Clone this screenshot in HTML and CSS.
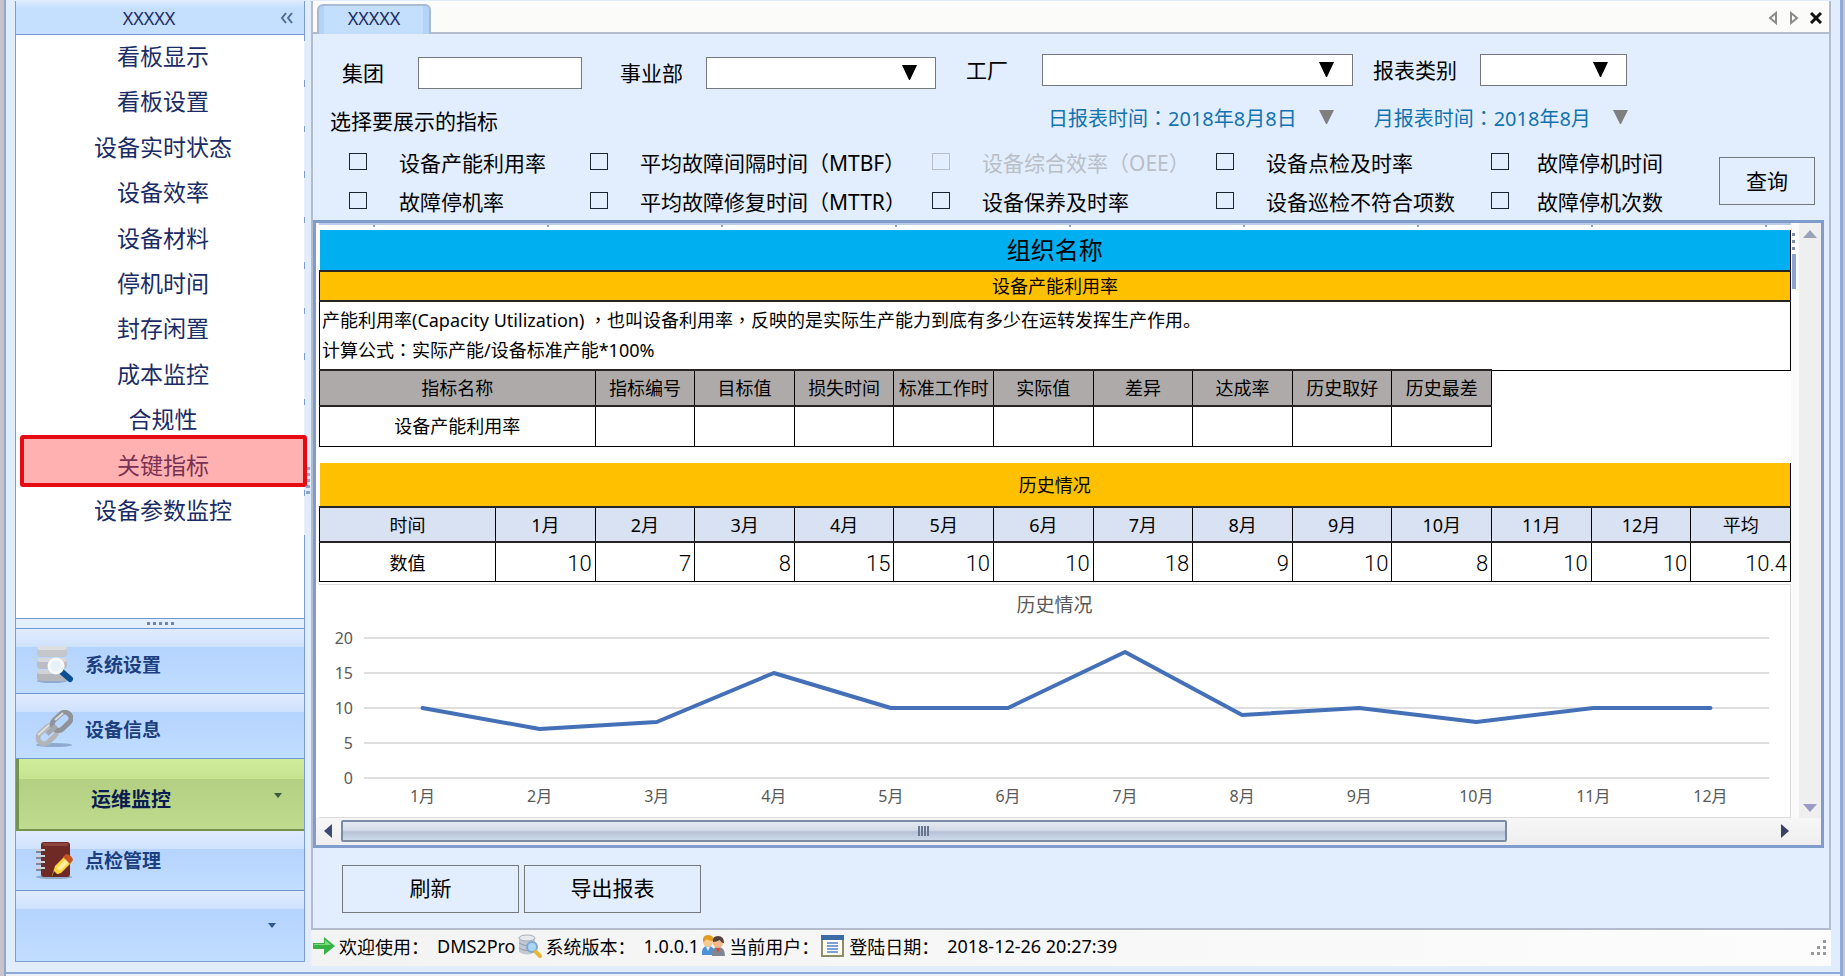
FILE: index.html
```html
<!DOCTYPE html>
<html lang="zh-CN">
<head>
<meta charset="utf-8">
<title>关键指标</title>
<link rel="stylesheet" href="styles.css">
</head>
<body>
<div class="window">
  <aside class="sidebar">
    <header class="side-head">
      <span>XXXXX</span>
      <button class="collapse" type="button" aria-label="收起">
        <svg width="14" height="12" viewBox="0 0 14 12"><path d="M6 1 2 6l4 5M12 1 8 6l4 5" fill="none" stroke="#4d6a9c" stroke-width="2"/></svg>
      </button>
    </header>
    <nav class="side-list">
      <a href="#">看板显示</a>
      <a href="#">看板设置</a>
      <a href="#">设备实时状态</a>
      <a href="#">设备效率</a>
      <a href="#">设备材料</a>
      <a href="#">停机时间</a>
      <a href="#">封存闲置</a>
      <a href="#">成本监控</a>
      <a href="#">合规性</a>
      <a href="#" class="current">关键指标</a>
      <a href="#">设备参数监控</a>
    </nav>
    <div class="grip"><i></i><i></i><i></i><i></i><i></i></div>
    <nav class="modules">
      <button type="button" class="module">
        <svg width="38" height="38" viewBox="0 0 38 38">
          <ellipse cx="17" cy="36" rx="15" ry="2" fill="#8fa9cf"/>
          <rect x="2" y="1" width="30" height="11" rx="4" fill="#c3c6ca"/><rect x="2" y="1" width="30" height="4" rx="2" fill="#dcdee0"/>
          <rect x="2" y="13" width="30" height="11" rx="4" fill="#b9bcc1"/><rect x="2" y="13" width="30" height="4" rx="2" fill="#d5d7da"/>
          <rect x="2" y="25" width="30" height="11" rx="4" fill="#b4b7bc"/><rect x="2" y="25" width="30" height="4" rx="2" fill="#d0d2d5"/>
          <path d="m27 27 8 7" stroke="#0d4f92" stroke-width="6" stroke-linecap="round"/>
          <circle cx="21" cy="21" r="7" fill="#e6f1f8" stroke="#f7f9fa" stroke-width="3"/>
        </svg>
        <span>系统设置</span>
      </button>
      <button type="button" class="module">
        <svg width="38" height="38" viewBox="0 0 38 38">
          <ellipse cx="19" cy="35" rx="18" ry="2" fill="#8fa9cf"/>
          <g fill="none" stroke-width="5">
            <rect x="-10" y="-6" width="21" height="12" rx="6" transform="translate(12 25) rotate(-43)" stroke="#b3b5b8"/>
            <rect x="-11" y="-6" width="21" height="12" rx="6" transform="translate(27 11) rotate(-43)" stroke="#8f9297"/>
            <path d="m12 24 9-8" stroke="#a4a7ab"/>
          </g>
          <path d="M3 25 14 15M20 10l8-7" stroke="#dcdedf" stroke-width="2" fill="none"/>
        </svg>
        <span>设备信息</span>
      </button>
      <button type="button" class="module active">
        <span>运维监控</span>
        <svg class="drop" width="8" height="5" viewBox="0 0 8 5"><path d="M0 0h8L4 5z" fill="#3d5c3d"/></svg>
      </button>
      <button type="button" class="module short">
        <svg width="38" height="38" viewBox="0 0 38 38">
          <ellipse cx="19" cy="36" rx="18" ry="2" fill="#8fa9cf"/>
          <rect x="6" y="1" width="29" height="35" rx="3" fill="#6f2a26"/><rect x="8" y="2" width="25" height="3" rx="1" fill="#8d443d"/>
          <path d="M1 9h9M1 15h9M1 21h9M1 27h9" stroke="#cfd3d8" stroke-width="2"/><path d="M1 11h9M1 17h9M1 23h9M1 29h9" stroke="#4b3a3d"/>
          <path d="m17 35 3-10 10-10 7 6-11 11z" fill="#ffd23c"/><path d="m22 27 10-10 3 3-10 10z" fill="#fff0a0"/>
          <path d="m28 16 3-3q6 1 7 6l-3 4z" fill="#c9541f"/><path d="m17 36 2-6 4 4z" fill="#4e2a18"/>
        </svg>
        <span>点检管理</span>
      </button>
      <div class="module rest">
        <svg class="drop" width="8" height="5" viewBox="0 0 8 5"><path d="M0 0h8L4 5z" fill="#2d588f"/></svg>
      </div>
    </nav>
    <div class="split-dots"><i></i><i></i><i></i><i></i><i></i></div>
  </aside>

  <main class="main">
    <div class="panel">
      <div class="tabs">
        <button type="button" class="tab">XXXXX</button>
        <div class="tab-tools">
          <button type="button" aria-label="上一个"><svg width="10" height="14" viewBox="0 0 10 14"><path d="M8 2v10L2 7z" fill="#fff" stroke="#8b8b8b" stroke-width="2"/></svg></button>
          <button type="button" aria-label="下一个"><svg width="10" height="14" viewBox="0 0 10 14"><path d="M2 2v10l6-5z" fill="#fff" stroke="#8b8b8b" stroke-width="2"/></svg></button>
          <button type="button" aria-label="关闭"><svg width="12" height="12" viewBox="0 0 12 12"><path d="m1 1 10 10M11 1 1 11" stroke="#111" stroke-width="3"/></svg></button>
        </div>
      </div>

      <form class="filters">
        <div class="row fields">
          <label for="group">集团</label>
          <input id="group" class="box w-group" type="text">
          <label for="division">事业部</label>
          <div class="pick w-division"><select id="division" class="box"><option></option></select><svg width="15" height="15" viewBox="0 0 15 15"><path d="M0 0h15L8 15H7z"/></svg></div>
          <div class="raised">
            <label for="factory">工厂</label>
            <div class="pick w-factory"><select id="factory" class="box"><option></option></select><svg width="15" height="15" viewBox="0 0 15 15"><path d="M0 0h15L8 15H7z"/></svg></div>
            <label for="kind">报表类别</label>
            <div class="pick w-kind"><select id="kind" class="box"><option></option></select><svg width="15" height="15" viewBox="0 0 15 15"><path d="M0 0h15L8 15H7z"/></svg></div>
          </div>
        </div>
        <div class="row dates">
          <span class="hint">选择要展示的指标</span>
          <div class="raised">
            <button type="button" class="date"><span>日报表时间<span class="mid" lang="zh-TW">：</span>2018年8月8日</span><svg width="15" height="14" viewBox="0 0 15 14"><path d="M0 0h15L8 14H7z" fill="#7f7f7f"/></svg></button>
            <button type="button" class="date"><span>月报表时间<span class="mid" lang="zh-TW">：</span>2018年8月</span><svg width="15" height="14" viewBox="0 0 15 14"><path d="M0 0h15L8 14H7z" fill="#7f7f7f"/></svg></button>
          </div>
        </div>
        <div class="metrics">
          <div class="checks">
            <label><input type="checkbox">设备产能利用率</label>
            <label><input type="checkbox"><span>平均故障间隔时间<span class="mid" lang="zh-TW">（</span>MTBF<span class="mid" lang="zh-TW">）</span></span></label>
            <label class="off"><input type="checkbox" disabled><span>设备综合效率<span class="mid" lang="zh-TW">（</span>OEE<span class="mid" lang="zh-TW">）</span></span></label>
            <label><input type="checkbox">设备点检及时率</label>
            <label><input type="checkbox">故障停机时间</label>
            <label><input type="checkbox">故障停机率</label>
            <label><input type="checkbox"><span>平均故障修复时间<span class="mid" lang="zh-TW">（</span>MTTR<span class="mid" lang="zh-TW">）</span></span></label>
            <label><input type="checkbox">设备保养及时率</label>
            <label><input type="checkbox">设备巡检不符合项数</label>
            <label><input type="checkbox">故障停机次数</label>
          </div>
          <button type="button" class="btn query">查询</button>
        </div>
      </form>

      <section class="viewer">
        <div class="view-body">
          <div class="sheet">
            <div class="ruler"></div>
            <table class="report">
              <colgroup><col class="c-first"><col span="13"></colgroup>
              <tbody>
                <tr class="title"><th colspan="14">组织名称</th></tr>
                <tr class="sub"><th colspan="14">设备产能利用率</th></tr>
                <tr class="desc"><td colspan="14">产能利用率(Capacity Utilization) <span class="mid" lang="zh-TW">，</span>也叫设备利用率<span class="mid" lang="zh-TW">，</span>反映的是实际生产能力到底有多少在运转发挥生产作用。<br>计算公式<span class="mid" lang="zh-TW">：</span>实际产能/设备标准产能*100%</td></tr>
                <tr class="heads"><th colspan="2">指标名称</th><th>指标编号</th><th>目标值</th><th>损失时间</th><th>标准工作时</th><th>实际值</th><th>差异</th><th>达成率</th><th>历史取好</th><th>历史最差</th><td class="none" colspan="3"></td></tr>
                <tr class="metric"><td colspan="2">设备产能利用率</td><td></td><td></td><td></td><td></td><td></td><td></td><td></td><td></td><td></td><td class="none" colspan="3"></td></tr>
                <tr class="gap"><td class="none" colspan="14"></td></tr>
                <tr class="history"><th colspan="14">历史情况</th></tr>
                <tr class="months"><th>时间</th><th>1月</th><th>2月</th><th>3月</th><th>4月</th><th>5月</th><th>6月</th><th>7月</th><th>8月</th><th>9月</th><th>10月</th><th>11月</th><th>12月</th><th>平均</th></tr>
                <tr class="values"><th>数值</th><td>10</td><td>7</td><td>8</td><td>15</td><td>10</td><td>10</td><td>18</td><td>9</td><td>10</td><td>8</td><td>10</td><td>10</td><td>10.4</td></tr>
              </tbody>
            </table>
            <div class="chart">
              <h2>历史情况</h2>
              <div class="scale"><span>20</span><span>15</span><span>10</span><span>5</span><span>0</span></div>
              <svg class="plot" viewBox="0 0 1200 140" preserveAspectRatio="none">
                <path class="grid" d="M0 0H1200M0 35H1200M0 70H1200M0 105H1200M0 140H1200"/>
                <polyline class="line" points="50,70 150,91 250,84 350,35 450,70 550,70 650,14 750,77 850,70 950,84 1050,70 1150,70"/>
              </svg>
              <div class="axis"><span>1月</span><span>2月</span><span>3月</span><span>4月</span><span>5月</span><span>6月</span><span>7月</span><span>8月</span><span>9月</span><span>10月</span><span>11月</span><span>12月</span></div>
            </div>
          </div>
          <div class="vscroll">
            <svg width="14" height="8" viewBox="0 0 14 8"><path d="M0 8h14L7 0z" fill="#9ba3b8"/></svg>
            <svg width="14" height="8" viewBox="0 0 14 8"><path d="M0 0h14L7 8z" fill="#9a9ac6"/></svg>
            <div class="edge"><i></i><i></i><i></i><b></b></div>
          </div>
        </div>
        <div class="hscroll">
          <svg width="8" height="14" viewBox="0 0 8 14"><path d="M8 0v14L0 7z" fill="#3d4a73"/></svg>
          <div class="track"><div class="thumb"><i></i><i></i><i></i><i></i></div></div>
          <svg width="8" height="14" viewBox="0 0 8 14"><path d="M0 0v14l8-7z" fill="#3d4066"/></svg>
        </div>
      </section>

      <div class="actions">
        <button type="button" class="btn">刷新</button>
        <button type="button" class="btn">导出报表</button>
      </div>
    </div>

    <footer class="status">
      <svg width="22" height="18" viewBox="0 0 22 18"><path d="M0 6h11V0l11 9-11 9v-6H0z" fill="#35b344"/><path d="M1 7h11V3l6 5H1z" fill="#7fdb7c"/></svg>
      <span class="name">欢迎使用：</span><span class="val">DMS2Pro</span>
      <svg class="ic" width="24" height="24" viewBox="0 0 24 24"><path d="M1 4v14q8 5 16 0V4z" fill="#c2c9d2"/><ellipse cx="9" cy="4" rx="8" ry="3" fill="#e6e9ed" stroke="#a7aeb8"/><path d="M1 9q8 5 16 0M1 14q8 5 16 0" fill="none" stroke="#929ba8"/><circle cx="14" cy="13" r="5" fill="#abd5f4" stroke="#7fa8cf" stroke-width="2"/><path d="m18 18 4 4" stroke="#eab72e" stroke-width="4" stroke-linecap="round"/></svg>
      <span class="name">系统版本：</span><span class="val">1.0.0.1</span>
      <svg class="ic" width="24" height="22" viewBox="0 0 24 22"><path d="M1 20q-1-9 6-9t7 9z" fill="#4d92d6"/><path d="M11 21q-1-9 6-9t7 9z" fill="#7e8791"/><path d="m15 13 2 5 2-5z" fill="#d64a33"/><path d="m5 12 2 4 2-4z" fill="#e7f1fb"/><circle cx="7" cy="7" r="5" fill="#f6c98d"/><path d="M2 7q-1-7 5-7 6 0 6 6-5 0-7-2-2 2-4 3z" fill="#e09c22"/><circle cx="17" cy="8" r="5" fill="#f3b98a"/><path d="M12 7q-1-6 5-6 6 0 6 7-3 0-4-3-4 2-7 2z" fill="#51403c"/></svg>
      <span class="name">当前用户：</span>
      <svg class="ic" width="24" height="24" viewBox="0 0 24 24"><path d="M1 2h21v20H1z" fill="#fdfdf6" stroke="#8d8e62" stroke-width="2"/><path d="M0 1h23v5H0z" fill="#3c6ba5"/><path d="M6 9h11M6 12h11M6 15h11M6 18h11" stroke="#7da0d6" stroke-width="2"/></svg>
      <span class="name">登陆日期：</span><span class="val">2018-12-26 20:27:39</span>
      <svg class="sizer" width="16" height="16" viewBox="0 0 16 16"><path d="M12 0h3v3h-3zM6 6h3v3H6zM12 6h3v3h-3zM0 12h3v3H0zM6 12h3v3H6zM12 12h3v3h-3z" fill="#9a9a9a"/></svg>
    </footer>
  </main>
</div>
</body>
</html>
```
FILE: styles.css
```css
* { box-sizing: border-box; }

body {
  margin: 0;
  font-family: "Noto Sans", "Noto Sans CJK SC", sans-serif;
  font-size: 18px;
  color: #000;
  background: #e3eefd;
}

button, input, select { font: inherit; color: inherit; margin: 0; }
button { padding: 0; border: 0; background: none; }
svg { display: block; flex: none; }
a { color: inherit; text-decoration: none; }

/* punctuation centred in its em box */
.mid { font-family: "Noto Sans CJK TC", sans-serif; line-height: 1; }

.window {
  display: flex;
  min-height: 100vh;
  gap: 6px;
  padding: 1px 12px 10px 11px;
  border: solid #c9c4c9;
  border-width: 0 2px 1px 4px;
  background: #e1edfd;
  box-shadow: inset 2px 0 #8da6d3, inset -3px 0 #8fabd8, inset 0 -2px #e9f0fa, inset 0 -4px #8ea9d6;
}

/* sidebar */
.sidebar {
  position: relative;
  display: flex;
  flex-direction: column;
  flex: none;
  width: 290px;
  margin-bottom: 4px;
  border: 1px solid #7d9dd0;
  border-top: 0;
  background: #fff;
  color: #1a2c66;
}

.side-head {
  position: relative;
  display: flex;
  align-items: center;
  justify-content: center;
  height: 34px;
  padding-right: 22px;
  border-bottom: 1px solid #7595cb;
  background: linear-gradient(#dcebff, #c4defe 25%, #c6e0ff);
}

.collapse { position: absolute; right: 10px; top: 11px; }

.side-list {
  display: grid;
  grid-auto-rows: 1fr;
  height: 500px;
  margin-bottom: auto;
  font-size: 23px;
}

.side-list a {
  position: relative;
  display: flex;
  align-items: center;
  justify-content: center;
  padding: 0 0 6px 6px;
}

.side-list a::after {
  content: "";
  position: absolute;
  right: -1px;
  bottom: 0;
  width: 1px;
  height: 39px;
  background: #e8effa;
}

.side-list .current::before {
  content: "";
  position: absolute;
  inset: -9px -3px 3px 4px;
  border: 4px solid #e60b12;
  border-radius: 3px;
  background: rgba(255, 60, 60, 0.4);
  z-index: 1;
}

.grip {
  display: flex;
  align-items: center;
  justify-content: center;
  gap: 3px;
  height: 11px;
  border: solid #6f97cf;
  border-width: 1px 0;
  background: #e3eefc;
}

.grip i { width: 3px; height: 3px; background: #6b87b5; }

.module {
  position: relative;
  display: flex;
  align-items: center;
  gap: 12px;
  width: 100%;
  height: 65px;
  padding: 6px 20px 0 19px;
  border-bottom: 1px solid #6f97cf;
  background: linear-gradient(#e0ebfd, #cfe2fd 18px, #b4d3fe 18px, #c1ddff);
  color: #1b3f7f;
  font-size: 19px;
  font-weight: 700;
}

.module.active {
  height: 72px;
  padding: 10px 0 0 72px;
  border: solid #74934f;
  border-width: 0 0 2px 3px;
  background: linear-gradient(#d0ed9c, #c5e38f 20px, #b2cf82 20px, #bfdc8e);
  color: #0a1c50;
  font-size: 20px;
}

.module.short { height: 60px; padding-top: 0; }
.module.rest { height: 70px; border-bottom: 0; }
.drop { position: absolute; right: 22px; top: 34px; }
.rest .drop { right: 28px; top: 32px; }

.split-dots { position: absolute; right: -6px; top: 466px; display: grid; gap: 3px; }
.split-dots i { width: 4px; height: 3px; background: #8ba4cf; }

/* main panel */
.main { flex: 1; min-width: 0; display: flex; flex-direction: column; }

.panel {
  flex: 1;
  display: flex;
  flex-direction: column;
  border: 2px solid #b4bccb;
  border-top: 0;
  background: #e2eefe;
}

.tabs {
  display: flex;
  align-items: flex-end;
  justify-content: space-between;
  height: 33px;
  padding: 0 7px 0 4px;
  border-bottom: 2px solid #b4bccb;
  background: #fbfbf9;
}

.tab {
  width: 114px;
  height: 30px;
  margin-bottom: -2px;
  padding-bottom: 4px;
  border: 2px solid #a9b9d2;
  border-bottom: 0;
  border-radius: 6px 6px 0 0;
  background: linear-gradient(90deg, #b2d4fa 5px, #c4defe 5px 104px, #b2d4fa 104px);
  color: #1a2c66;
}

.tab-tools { display: flex; align-items: center; gap: 11px; height: 28px; }

.filters { padding-top: 10px; font-size: 21px; }
.row { display: flex; align-items: center; }

.fields { height: 58px; padding-left: 29px; }
.fields label { margin-right: 23px; padding-bottom: 3px; }
.fields > label:first-child { margin-right: 34px; }

.box {
  display: block;
  width: 100%;
  height: 32px;
  border: 1px solid #75787d;
  border-radius: 0;
  background: #fff;
  appearance: none;
}

.w-group { width: 164px; margin-right: 38px; }
.pick { position: relative; }
.pick svg { position: absolute; right: 19px; top: 8px; pointer-events: none; }
.w-division { width: 230px; }
.w-factory { width: 311px; margin-right: 20px; }
.w-kind { width: 147px; }
.raised { display: flex; align-items: center; margin-left: 30px; padding-bottom: 6px; }
.raised label:first-child { margin-right: 34px; }

.dates { height: 40px; padding: 0 0 4px 17px; }

.dates .raised {
  gap: 40px;
  margin-left: 550px;
  color: #1273b1;
  font-size: 20px;
}

.date { display: flex; align-items: center; gap: 22px; white-space: nowrap; }

.metrics {
  display: flex;
  align-items: center;
  padding: 0 14px 0 36px;
}

.checks {
  flex: 1;
  display: grid;
  grid-template-columns: 241fr 342fr 284fr 275fr 228fr;
  grid-auto-rows: 39px;
}

.checks label { display: flex; align-items: center; gap: 32px; white-space: nowrap; }
.checks label:nth-child(5n) { gap: 28px; }

.checks input {
  width: 18px;
  height: 17px;
  border: 1px solid #1c2430;
  appearance: none;
}

.checks .off { color: #b9bec7; }
.checks .off input { border-color: #b9bec7; }

.btn {
  width: 177px;
  height: 48px;
  border: 1px solid #75787d;
  background: #e2eefe;
  font-size: 21px;
}

.query { width: 96px; padding-bottom: 3px; }

/* report viewer */
.viewer {
  flex: 1;
  display: flex;
  flex-direction: column;
  margin-right: 5px;
  border: 3px solid #7f9ccd;
  background: #f2f2f2;
}

.view-body { flex: 1; display: flex; }

.sheet {
  flex: 1;
  min-width: 0;
  display: flex;
  flex-direction: column;
  padding-left: 3px;
  background: #fff;
}

.ruler {
  height: 7px;
  border-top: 2px solid #b9cdea;
  background: repeating-linear-gradient(90deg, transparent 0 54px, #8ea0bf 54px 56px, transparent 56px 174px) 0 0 / 100% 2px no-repeat;
}

.report {
  width: 100%;
  border-collapse: collapse;
  table-layout: fixed;
}

.c-first { width: 176px; }

.report th, .report td {
  padding: 0;
  border: 1px solid #000;
  border-width: 2px 1px 1px;
  border-top-color: #282424;
  font-weight: 400;
  text-align: center;
  line-height: 26px;
}

.title { height: 41px; }
.report .title th { border-left: 0; border-top: 0; background: #00aff0; font-size: 24px; }
.sub { height: 30px; }
.report .sub th, .report .history th { background: #ffc000; }
.desc { height: 69px; }
.report .desc td { padding: 0 2px 2px; text-align: left; line-height: 30px; }
.heads { height: 36px; }
.report .heads th { background: #aeaaa9; }
.metric { height: 40px; }
.gap { height: 17px; }
.report .none { border: 0; }
.history { height: 44px; }
.report .history th { border-left: 0; border-top: 0; }
.months { height: 35px; }
.report .months th { background: #d9e2f2; }
.values { height: 39px; }
.report .values th { padding-top: 3px; }

.report .values td {
  padding: 4px 3px 0 0;
  font-family: Roboto, sans-serif;
  font-size: 22px;
  font-weight: 300;
  text-align: right;
}

.chart {
  flex: 1;
  display: grid;
  grid-template: 53px 140px 39px / 45px 1fr;
  align-content: start;
  margin-top: 2px;
  padding-right: 21px;
  border: solid #dcdcdc;
  border-width: 1px 1px 1px 0;
  color: #595959;
  font-size: 16px;
}

.chart h2 {
  grid-column: 1 / 3;
  margin: 0 -21px 0 0;
  font-size: 19px;
  font-weight: 400;
  line-height: 40px;
  text-align: center;
}

.scale {
  display: flex;
  flex-direction: column;
  justify-content: space-between;
  margin: -10px 11px -10px 0;
  line-height: 20px;
  text-align: right;
}

.plot { width: 100%; height: 140px; overflow: visible; }
.plot path, .plot polyline { fill: none; vector-effect: non-scaling-stroke; }
.grid { stroke: #dedede; stroke-width: 2px; }
.line { stroke: #4470b8; stroke-width: 4px; stroke-linejoin: round; stroke-linecap: round; }

.axis {
  grid-column: 2;
  display: grid;
  grid-template-columns: repeat(12, 1fr);
  line-height: 36px;
  text-align: center;
}

.vscroll {
  position: relative;
  display: flex;
  flex-direction: column;
  align-items: center;
  justify-content: space-between;
  width: 30px;
  padding: 7px 0 6px;
  border-left: 8px solid #fafafa;
  background: #efefef;
}

.edge { position: absolute; left: -7px; top: 10px; display: grid; gap: 4px; }
.edge i { width: 3px; height: 3px; background: #7d8ba6; }
.edge b { width: 4px; height: 35px; background: #8ea3d4; }

.hscroll {
  display: flex;
  align-items: center;
  gap: 9px;
  height: 27px;
  padding: 0 32px 0 8px;
  background: linear-gradient(#f7f7f7, #eee);
}

.track { flex: 1; display: flex; }
.track::after { content: ""; flex: 13; }

.thumb {
  display: flex;
  flex: 57;
  align-items: center;
  justify-content: center;
  gap: 1px;
  height: 22px;
  border: 2px solid #7c8ba4;
  border-radius: 2px;
  background: linear-gradient(#e3e9f2, #d5dce8 45%, #b8c2d6 55%, #ccdaec);
}

.thumb i { width: 2px; height: 10px; background: #69768f; }

.actions { display: flex; gap: 5px; padding: 17px 29px 15px; }
.actions .btn { padding-bottom: 3px; }

/* status bar */
.status {
  display: flex;
  align-items: center;
  height: 36px;
  padding: 0 4px 3px 2px;
  background: linear-gradient(90deg, #f3f3f3, #fcfcfc);
  white-space: nowrap;
}

.name { margin-left: 4px; }
.val { margin-left: 8px; }
.ic { margin-left: 2px; }
.sizer { margin: 4px 0 0 auto; }
```
